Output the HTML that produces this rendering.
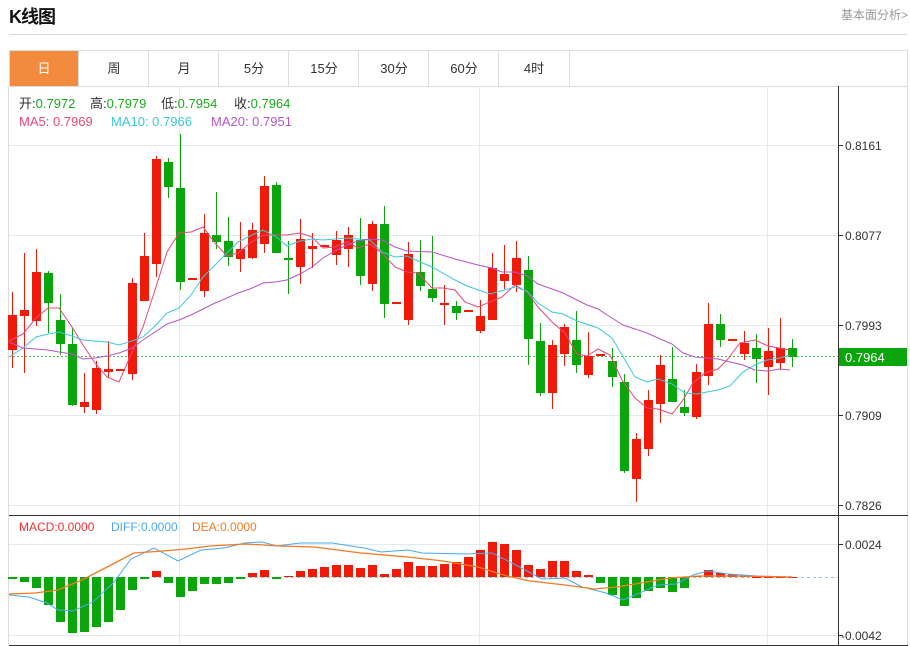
<!DOCTYPE html>
<html><head><meta charset="utf-8"><style>
body{margin:0;width:910px;height:646px;background:#fff;font-family:"Liberation Sans","Noto Sans CJK SC",sans-serif;overflow:hidden;position:relative}
.t{position:absolute}
</style></head><body>
<div class="t" style="left:9px;top:3px;font-size:18px;font-weight:bold;color:#111;letter-spacing:-1px">K线图</div>
<div class="t" style="left:841px;top:6px;font-size:12px;color:#999">基本面分析&gt;</div>
<div class="t" style="left:9px;top:34px;width:898px;height:1px;background:#d8d8d8"></div>
<div class="t" style="left:9px;top:50px;width:897px;height:35px;border:1px solid #ddd;border-bottom:1px solid #ddd"></div>
<div class="t" style="left:10px;top:51px;width:68px;height:35px;background:#f38b3f;color:#fff;font-size:13px;text-align:center;line-height:35px">日</div>
<div class="t" style="left:78px;top:51px;font-size:13px;color:#333;line-height:35px">
<span style="position:absolute;left:0;width:70px;text-align:center;border-left:1px solid #ddd;height:35px">周</span>
<span style="position:absolute;left:70px;width:70px;text-align:center;border-left:1px solid #ddd;height:35px">月</span>
<span style="position:absolute;left:140px;width:70px;text-align:center;border-left:1px solid #ddd;height:35px">5分</span>
<span style="position:absolute;left:210px;width:70px;text-align:center;border-left:1px solid #ddd;height:35px">15分</span>
<span style="position:absolute;left:280px;width:70px;text-align:center;border-left:1px solid #ddd;height:35px">30分</span>
<span style="position:absolute;left:350px;width:70px;text-align:center;border-left:1px solid #ddd;height:35px">60分</span>
<span style="position:absolute;left:420px;width:70px;text-align:center;border-left:1px solid #ddd;border-right:1px solid #ddd;height:35px">4时</span>
</div>
<svg class="t" style="left:0;top:0" width="910" height="646" id="s">
<g stroke="#e3e9ef" stroke-width="1">
<line x1="9" y1="145.5" x2="838" y2="145.5"/><line x1="9" y1="235.5" x2="838" y2="235.5"/><line x1="9" y1="325.5" x2="838" y2="325.5"/><line x1="9" y1="415.5" x2="838" y2="415.5"/><line x1="9" y1="505.5" x2="838" y2="505.5"/>
<line x1="9" y1="544.5" x2="838" y2="544.5"/><line x1="9" y1="635.5" x2="838" y2="635.5"/>
<line x1="179.5" y1="86" x2="179.5" y2="645"/><line x1="479.5" y1="86" x2="479.5" y2="645"/><line x1="767.5" y1="86" x2="767.5" y2="645"/>
</g>
<line x1="8.5" y1="86" x2="8.5" y2="645" stroke="#ddd"/>
<line x1="907.5" y1="86" x2="907.5" y2="645" stroke="#ddd"/>
<line x1="838.5" y1="86" x2="838.5" y2="645" stroke="#333"/>
<line x1="9" y1="515.5" x2="908" y2="515.5" stroke="#333"/>
<line x1="9" y1="645.5" x2="908" y2="645.5" stroke="#333"/>
<g stroke="#333"><line x1="838" y1="145.5" x2="843" y2="145.5"/><line x1="838" y1="235.5" x2="843" y2="235.5"/><line x1="838" y1="325.5" x2="843" y2="325.5"/><line x1="838" y1="415.5" x2="843" y2="415.5"/><line x1="838" y1="505.5" x2="843" y2="505.5"/><line x1="838" y1="544.5" x2="843" y2="544.5"/><line x1="838" y1="635.5" x2="843" y2="635.5"/></g>
<g font-size="12" fill="#333" font-family="Liberation Sans,sans-serif">
<text x="845" y="150">0.8161</text><text x="845" y="240">0.8077</text><text x="845" y="330">0.7993</text><text x="845" y="420">0.7909</text><text x="845" y="510">0.7826</text>
<text x="845" y="549">0.0024</text><text x="841" y="640">-0.0042</text>
</g>
<line x1="9" y1="356.5" x2="838" y2="356.5" stroke="#4cc44c" stroke-dasharray="2,2"/>
<rect x="839" y="348" width="68" height="18" fill="#0aa50a"/>
<text x="845" y="362" font-size="13" fill="#fff">0.7964</text>
<line x1="9" y1="577.5" x2="838" y2="577.5" stroke="#8cc8e8" stroke-dasharray="3,3"/>
<g id="c"></g>
<polyline fill="none" stroke="#e8457c" stroke-width="1" points="9,341 23,334 36,318 48,308 59,308 72,327 83,345 95,363 107,377 119,382 132,352 143,327 155,290 167,252 179,233 191,232 203,227 215,243 227,256 238,253 250,243 263,235 275,235 287,235 300,233 312,237 323,248 335,247 347,242 358,248 370,244 382,253 395,267 407,272 418,273 432,288 443,288 455,290 465,302 478,307 502,297 515,285 527,292 538,307 552,322 565,333 577,354 587,356 598,349 610,355 622,380 635,398 647,408 658,409 672,414 683,400 693,383 705,373 718,369 727,360 740,343 755,340 768,346 790,350"/>
<polyline fill="none" stroke="#3cc8dc" stroke-width="1" points="9,357 23,348 36,337 48,334 59,332 72,336 83,340 107,342 119,345 132,341 143,337 155,326 167,313 179,308 191,295 203,277 215,265 227,253 238,242 250,236 263,230 275,236 287,246 300,241 312,239 323,240 347,238 358,239 370,240 382,252 395,257 407,256 418,261 432,267 455,280 467,286 490,294 515,287 527,291 538,303 552,312 563,314 577,321 598,328 612,338 635,377 647,382 658,379 672,384 685,393 697,394 707,392 718,390 730,386 743,372 755,365 767,360 780,358 790,355"/>
<polyline fill="none" stroke="#b455c8" stroke-width="1" points="9,342 23,348 48,350 59,352 72,354 83,359 95,358 107,356 119,353 132,348 143,340 155,332 167,324 179,320 191,315 203,309 215,303 227,298 238,293 250,289 263,283 275,282 287,280 300,274 312,267 323,258 335,251 347,245 358,241 370,239 382,240 395,247 407,251 432,252 455,259 478,265 492,268 502,272 515,272 527,276 538,284 552,289 563,293 575,299 587,305 598,309 612,318 623,325 647,333 658,338 672,344 683,353 695,357 718,359 730,362 743,365 755,370 767,371 780,369 790,370"/>
<g id="m"></g>
<polyline fill="none" stroke="#4aa8f0" stroke-width="1" points="9,595 29,597 47,603 58,610 73,611 93,602 114,582 131,559 154,548 178,561 201,550 224,548 245,543 262,542 277,546 300,543 332,543 364,548 381,552 408,550 422,553 466,554 492,553 512,563 542,579 565,578 582,587 606,593 623,600 635,595 658,585 676,584 693,575 708,571 728,574 757,576 792,577"/>
<polyline fill="none" stroke="#f57a20" stroke-width="1.3" points="9,594 35,593 58,590 82,580 111,565 134,553 163,551 186,549 210,546 245,544 280,546 314,547 361,553 408,557 443,561 478,567 507,576 530,581 565,585 594,589 617,587 641,583 670,578 699,576 734,576 792,577"/>
<g font-size="13">
<text x="19" y="108" fill="#333">开:<tspan fill="#1aaa1a">0.7972</tspan></text>
<text x="90" y="108" fill="#333">高:<tspan fill="#1aaa1a">0.7979</tspan></text>
<text x="161" y="108" fill="#333">低:<tspan fill="#1aaa1a">0.7954</tspan></text>
<text x="234" y="108" fill="#333">收:<tspan fill="#1aaa1a">0.7964</tspan></text>
<text x="19" y="126" fill="#e8457c">MA5: 0.7969</text>
<text x="111" y="126" fill="#3cc8dc">MA10: 0.7966</text>
<text x="211" y="126" fill="#b455c8">MA20: 0.7951</text>
</g>
<g font-size="12">
<text x="19" y="531" fill="#f03030">MACD:0.0000</text>
<text x="111" y="531" fill="#4aa8f0">DIFF:0.0000</text>
<text x="192" y="531" fill="#f57a20">DEA:0.0000</text>
</g>
</svg>
<script>
var R="#f01a0a",G="#0aa50a";
var d=[["r",315,350,292,368],["r",310,316,253,373],["r",272,321,249,326],["g",273,303,271,333],["g",320,344,294,355],["g",344,405,328,406],["r",402,407,373,413],["r",368,410,361,414],["r",369,372,341,378],["r",369,371,369,371],["r",283,374,278,380],["r",256,301,233,301],["r",159,264,156,277],["g",162,187,158,198],["g",188,282,134,290],["r",278,280,278,280],["r",233,291,214,297],["g",235,242,192,249],["g",241,257,217,266],["r",249,259,222,272],["r",230,258,223,259],["r",186,244,176,253],["g",185,253,182,253],["g",258,260,241,294],["r",239,267,219,284],["r",246,249,233,268],["r",245,247,245,247],["r",240,255,231,265],["r",235,249,227,267],["g",240,276,218,285],["r",224,284,221,291],["g",224,304,206,318],["r",302,304,302,304],["r",254,320,242,325],["g",272,286,240,291],["g",289,298,236,302],["r",303,305,285,325],["g",306,313,301,320],["r",310,312,310,312],["r",316,331,300,333],["r",268,320,253,320],["r",274,281,245,289],["r",258,285,241,292],["g",270,339,256,365],["g",341,393,323,396],["r",345,393,340,409],["r",327,354,324,366],["g",340,365,311,373],["r",356,375,332,378],["r",354,356,354,356],["g",361,377,348,387],["g",382,471,374,473],["r",439,479,433,502],["r",400,449,390,456],["r",365,404,355,423],["g",379,402,347,402],["g",407,413,390,416],["r",372,417,364,419],["r",324,376,303,385],["g",324,340,314,347],["r",339,341,339,341],["r",343,354,331,360],["g",348,359,334,383],["r",351,367,328,395],["r",348,363,318,370],["g",348,357,339,367]];
var m=[579,582,588,605,622,633,632,627,622,610,590,579,-571,583,597,591,584,584,583,579,-573,-570,579,-576,-571,-569,-567,-565,-565,-568,-565,-574,-569,-562,-566,-566,-564,-562,-557,-550,-542,-544,-550,-565,-569,-561,-561,-571,-575,583,595,606,598,591,588,592,588,-576,-570,-573,-574,-576,-577,-577,-577,-577];
var s="",t="";
for(var i=0;i<d.length;i++){var x=12+12*i,c=d[i][0]=="r"?R:G,e=d[i];
s+='<line x1="'+(x+.5)+'" y1="'+e[3]+'" x2="'+(x+.5)+'" y2="'+e[4]+'" stroke="'+c+'"/>';
var h=Math.max(2,e[2]-e[1]);s+='<rect x="'+(x-4)+'" y="'+e[1]+'" width="9" height="'+h+'" fill="'+c+'"/>';}
for(var i=0;i<m.length;i++){var x=12+12*i,v=m[i];
if(v<0){v=-v;t+='<rect x="'+(x-4)+'" y="'+v+'" width="9" height="'+Math.max(1,577-v)+'" fill="'+R+'"/>';}
else t+='<rect x="'+(x-4)+'" y="577" width="9" height="'+Math.max(1,v-577)+'" fill="'+G+'"/>';}
document.getElementById("c").innerHTML=s;document.getElementById("m").innerHTML=t;
</script>
</body></html>
